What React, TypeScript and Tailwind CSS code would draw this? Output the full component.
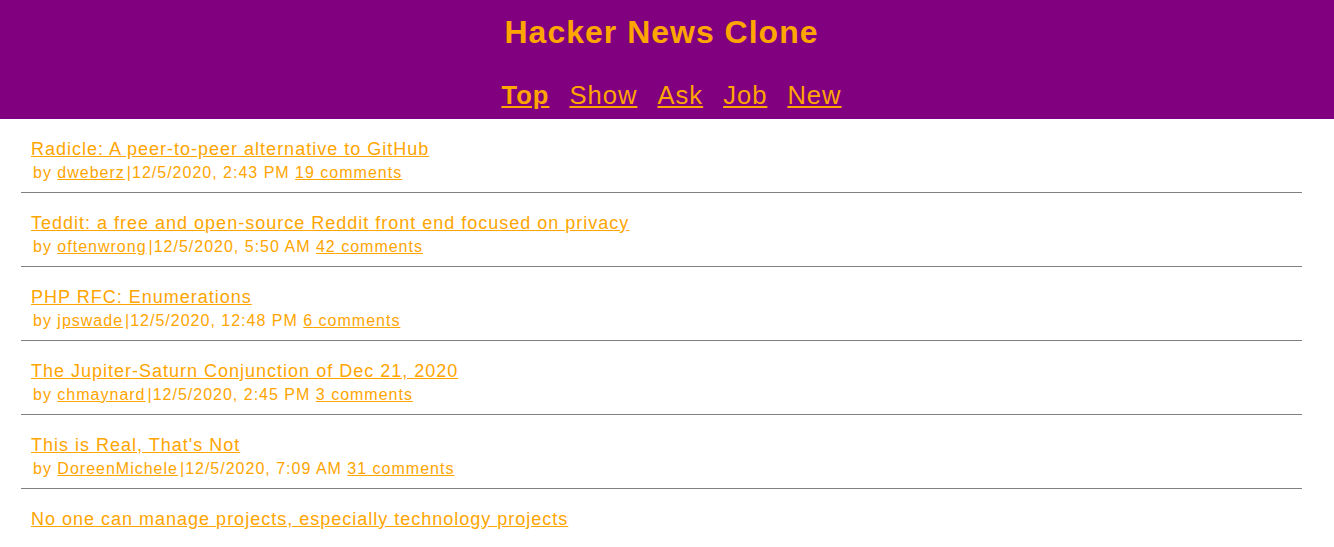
const stories = [
  {
    title: 'Radicle: A peer-to-peer alternative to GitHub',
    by: 'dweberz',
    time: '12/5/2020, 2:43 PM',
    comments: 19,
  },
  {
    title: 'Teddit: a free and open-source Reddit front end focused on privacy',
    by: 'oftenwrong',
    time: '12/5/2020, 5:50 AM',
    comments: 42,
  },
  {
    title: 'PHP RFC: Enumerations',
    by: 'jpswade',
    time: '12/5/2020, 12:48 PM',
    comments: 6,
  },
  {
    title: 'The Jupiter-Saturn Conjunction of Dec 21, 2020',
    by: 'chmaynard',
    time: '12/5/2020, 2:45 PM',
    comments: 3,
  },
  {
    title: "This is Real, That's Not",
    by: 'DoreenMichele',
    time: '12/5/2020, 7:09 AM',
    comments: 31,
  },
  {
    title: 'No one can manage projects, especially technology projects',
  },
];

const tabs = ['Top', 'Show', 'Ask', 'Job', 'New'];

export default function App() {
  return (
    <div className="min-h-screen bg-white text-[#ffa500] tracking-[1px] font-['Liberation_Sans',Arial,sans-serif]">
      <header className="bg-[#800080] pt-[14px] pb-[9px]">
        <h1 className="text-center text-[32px] leading-[37px] font-bold pr-[11px]">Hacker News Clone</h1>
        <nav className="flex justify-center gap-[20px] mt-[30px] pl-[9px] text-[25.6px] leading-[29px]">
          {tabs.map((tab) => (
            <a key={tab} href="#" className={`underline ${tab === 'Top' ? 'font-bold' : ''}`}>
              {tab}
            </a>
          ))}
        </nav>
      </header>

      <ul className="pl-[21px] pr-[32px]">
        {stories.map((story) => (
          <li
            key={story.title}
            className="border-b border-[#808080] last:border-b-0 pl-[10px] pt-[20px] pb-[10px]"
          >
            <a href="#" className="block w-fit text-[18px] leading-[21px] underline">
              {story.title}
            </a>
            {story.by && (
              <div className="mt-[4px] ml-[2px] text-[16px] leading-[18px]">
                by{' '}
                <a href="#" className="underline">
                  {story.by}
                </a>
                <span className="ml-[2px]">|</span>
                {story.time}{' '}
                <a href="#" className="underline">
                  {story.comments} comments
                </a>
              </div>
            )}
          </li>
        ))}
      </ul>
    </div>
  );
}
